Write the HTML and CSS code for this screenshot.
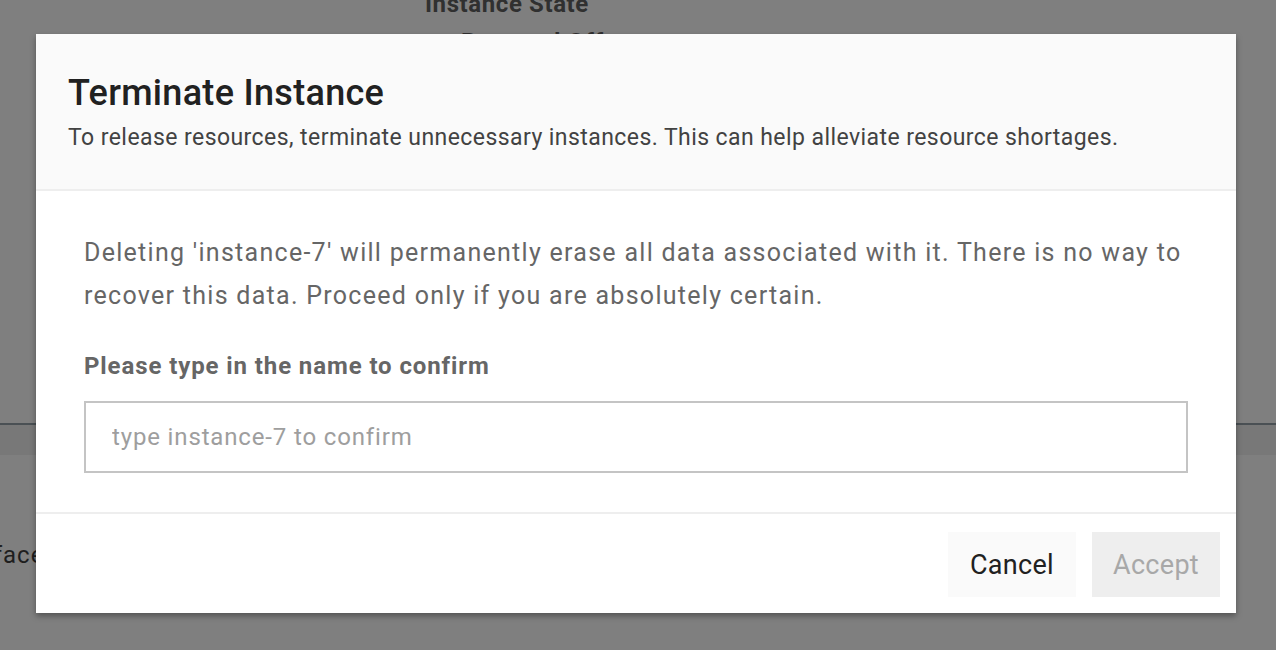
FILE: index.html
```html
<!DOCTYPE html>
<html lang="en">
<head>
<meta charset="utf-8">
<title>Terminate Instance</title>
<link rel="stylesheet" href="styles.css">
</head>
<body>
<div class="backdrop">
  <div class="state-col">
    <div class="state-label">Instance State</div>
    <div class="state-value">Powered Off</div>
  </div>
  <div class="divider"></div>
  <div class="band"></div>
  <div class="iface">Interface</div>
</div>

<div class="modal" role="dialog">
  <div class="modal-header">
    <h1 class="modal-title">Terminate Instance</h1>
    <p class="modal-subtitle">To release resources, terminate unnecessary instances. This can help alleviate resource shortages.</p>
  </div>
  <div class="modal-body">
    <p class="warning">Deleting 'instance-7' will permanently erase all data associated with it. There is no way to recover this data. Proceed only if you are absolutely certain.</p>
    <label class="confirm-label" for="confirm">Please type in the name to confirm</label>
    <input class="confirm-input" id="confirm" type="text" placeholder="type instance-7 to confirm">
  </div>
  <div class="modal-footer">
    <button class="btn btn-cancel">Cancel</button>
    <button class="btn btn-accept" disabled>Accept</button>
  </div>
</div>
</body>
</html>
```
FILE: styles.css
```css
* { box-sizing: border-box; }
html, body { margin: 0; padding: 0; }
body {
  width: 1276px;
  height: 650px;
  overflow: hidden;
  background: #7f7f7f;
  font-family: Roboto, "Liberation Sans", Arial, sans-serif;
}
.backdrop { width: 1276px; height: 650px; }
.state-col { padding-left: 425px; margin-top: -11px; }
.state-label { font-size: 24px; font-weight: 700; line-height: 30px; color: #303030; letter-spacing: 0.6px; }
.state-value { font-size: 24px; font-weight: 700; line-height: 30px; color: #303030; padding-left: 36px; margin-top: 8px; letter-spacing: 0.8px; }
.divider { margin-top: 366px; height: 2px; background: #4a5054; }
.band { height: 30px; background: #787878; }
.iface { font-size: 24px; color: #1e1e1e; margin-top: 85px; margin-left: -60px; line-height: 30px; letter-spacing: 1px; }

.modal {
  position: absolute;
  top: 34px;
  left: 36px;
  width: 1200px;
  height: 579px;
  background: #ffffff;
  box-shadow: 0 3px 6px rgba(0,0,0,0.35);
  display: flex;
  flex-direction: column;
}
.modal-header {
  background: #fafafa;
  border-bottom: 2px solid #eeeeee;
  padding: 37px 32px 0;
  height: 157px;
}
.modal-title {
  margin: 0;
  font-size: 36px;
  font-weight: 500;
  line-height: 44px;
  color: #212121;
  letter-spacing: 0.3px;
}
.modal-subtitle {
  margin: 8px 0 0;
  font-size: 23px;
  line-height: 30px;
  color: #424242;
  letter-spacing: 0.43px;
}
.modal-body {
  padding: 40px 48px 0;
  flex: 1;
  display: flex;
  flex-direction: column;
  border-bottom: 2px solid #eeeeee;
}
.warning {
  margin: 0;
  font-size: 25px;
  line-height: 43px;
  color: #666666;
  letter-spacing: 1.28px;
}
.confirm-label {
  margin-top: 34px;
  font-size: 24px;
  font-weight: 700;
  line-height: 30px;
  color: #666666;
  letter-spacing: 0.9px;
}
.confirm-input {
  margin-top: 20px;
  height: 72px;
  width: 100%;
  border: 2px solid #c4c4c4;
  padding: 0 26px;
  font-family: inherit;
  font-size: 24px;
  letter-spacing: 0.85px;
  color: #333;
  background: #fff;
  outline: none;
}
.confirm-input::placeholder { color: #9e9e9e; }
.modal-footer {
  height: 99px;
  display: flex;
  justify-content: flex-end;
  align-items: flex-start;
  gap: 16px;
  padding: 18px 16px 0;
}
.btn {
  width: 128px;
  height: 65px;
  border: none;
  font-family: inherit;
  font-size: 27px;
  letter-spacing: 0.3px;
  padding: 0;
}
.btn-cancel { background: #fafafa; color: #212121; }
.btn-accept { background: #eeeeee; color: #a8a8a8; }
```
